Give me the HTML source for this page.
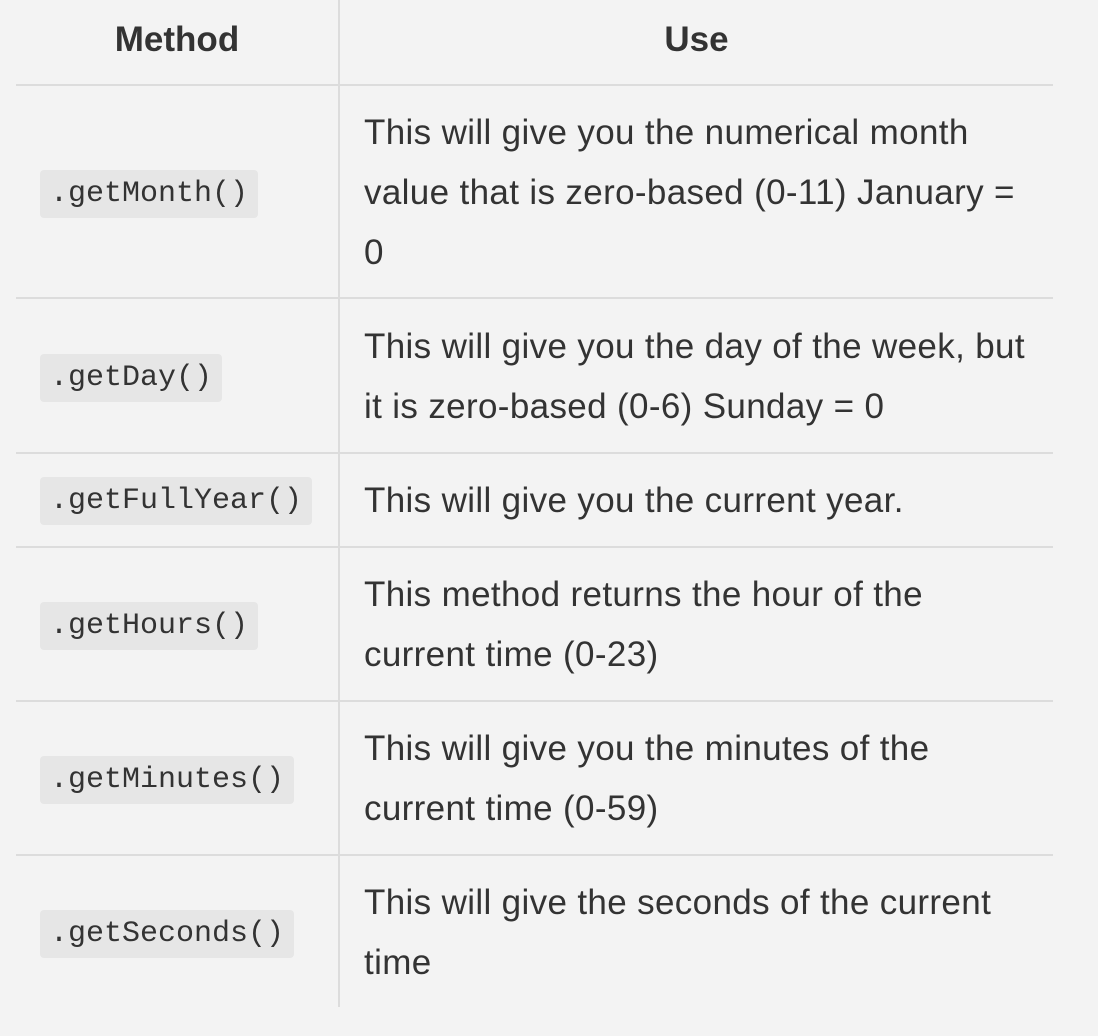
<!DOCTYPE html>
<html><head><meta charset="utf-8"><style>
html,body{margin:0;padding:0;width:1098px;height:1036px;background:#f3f3f3;overflow:hidden}
body{position:relative;font-family:"Liberation Sans",sans-serif;color:#333}
.h{position:absolute;left:16px;width:1037px;height:2px;background:#dcdcdc}
.v{position:absolute;left:338px;top:0;width:2px;height:1007px;background:#dcdcdc}
.th{position:absolute;top:18px;font-weight:bold;font-size:35px;line-height:44px;color:#333;text-align:center}
.use{position:absolute;left:364px;width:700px;font-size:35px;line-height:60px;color:#333;white-space:nowrap;letter-spacing:0.35px}
.code{position:absolute;left:40px;height:48px;line-height:48px;padding:0 10px;background:#e6e6e6;border-radius:4px;font-family:"Liberation Mono",monospace;font-size:30px;color:#333}
</style></head><body>
<div class="v"></div>
<div class="th" style="left:16px;width:322px">Method</div>
<div class="th" style="left:340px;width:713px">Use</div>
<div class="h" style="top:84px"></div>
<div class="h" style="top:297px"></div>
<div class="h" style="top:452px"></div>
<div class="h" style="top:546px"></div>
<div class="h" style="top:700px"></div>
<div class="h" style="top:854px"></div>

<div class="code" style="top:170px">.getMonth()</div>
<div class="use" style="top:103px">This will give you the numerical month<br>value that is zero-based (0-11) January =<br>0</div>

<div class="code" style="top:354px">.getDay()</div>
<div class="use" style="top:317px">This will give you the day of the week, but<br>it is zero-based (0-6) Sunday = 0</div>

<div class="code" style="top:477px">.getFullYear()</div>
<div class="use" style="top:471px">This will give you the current year.</div>

<div class="code" style="top:602px">.getHours()</div>
<div class="use" style="top:565px">This method returns the hour of the<br>current time (0-23)</div>

<div class="code" style="top:756px">.getMinutes()</div>
<div class="use" style="top:719px">This will give you the minutes of the<br>current time (0-59)</div>

<div class="code" style="top:910px">.getSeconds()</div>
<div class="use" style="top:873px">This will give the seconds of the current<br>time</div>
</body></html>
